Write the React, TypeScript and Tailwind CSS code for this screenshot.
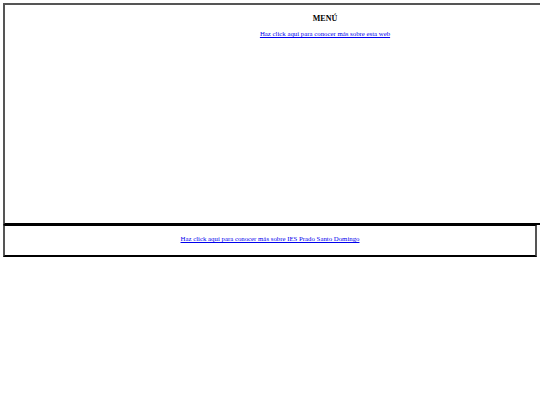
import React from 'react';

const serif = { fontFamily: '"Liberation Serif", "Times New Roman", serif' };

export default function App() {
  return (
    <div className="w-[540px] h-[405px] overflow-hidden bg-white pt-[3px] pl-[3px] text-black" style={serif}>
      {/* Cabecera / menú */}
      <div className="w-[642px] h-[222px] border-t-2 border-l-2 border-b-2 border-t-[#555] border-l-[#555] border-b-black flex flex-col items-center pt-[8px]">
        <h2 className="text-[8px] font-bold leading-[12px]">MENÚ</h2>
        <a href="#" className="mt-[4px] text-[6.8px] leading-[10px] text-[#0000ee] underline">
          Haz click aquí para conocer más sobre esta web
        </a>
      </div>

      {/* Pie */}
      <div className="w-[534px] h-[32px] border-t border-l-2 border-r-2 border-b-2 border-t-black border-l-[#555] border-r-[#555] border-b-black flex justify-center pt-[8px]">
        <a href="#" className="text-[6.8px] leading-[10px] text-[#0000ee] underline">
          Haz click aquí para conocer más sobre IES Prado Santo Domingo
        </a>
      </div>
    </div>
  );
}
